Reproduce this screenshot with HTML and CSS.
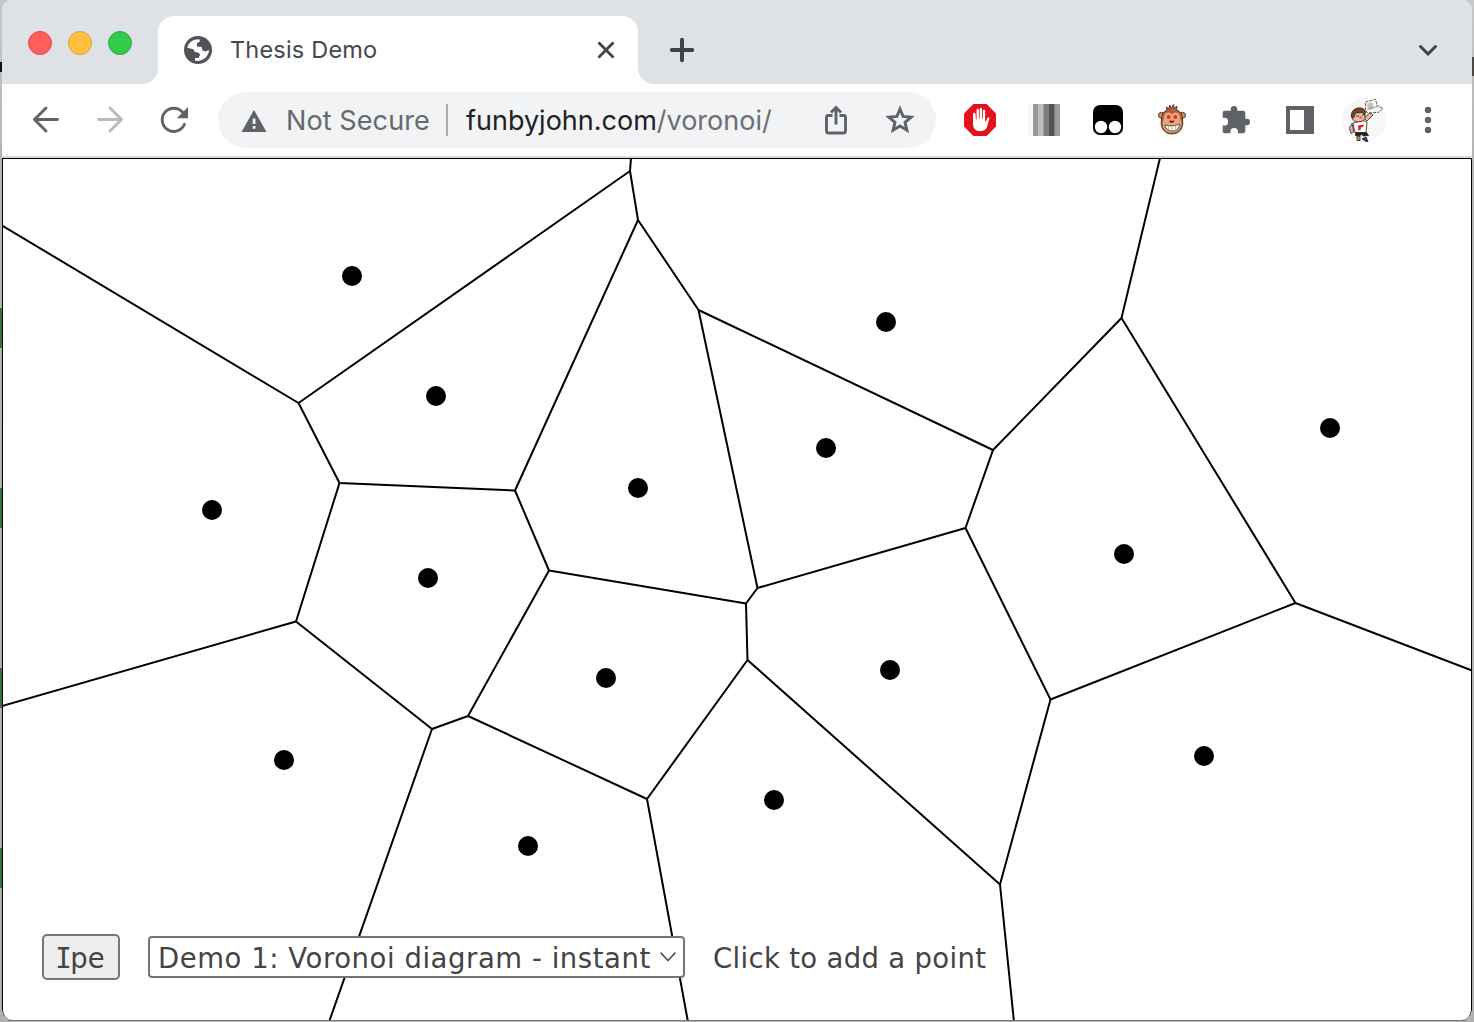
FILE: index.html
```html
<!DOCTYPE html>
<html lang="en">
<head>
<meta charset="utf-8">
<title>Thesis Demo</title>
<link rel="stylesheet" href="styles.css">
</head>
<body>
<div class="window">
  <header class="tabstrip">
    <div class="lights"><span class="light red"></span><span class="light yellow"></span><span class="light green"></span></div>
    <div class="tab">
      <svg class="globe" viewBox="0 0 28 28" width="28" height="28"><circle cx="14" cy="14" r="14" fill="#505357"/><path fill="#fff" d="M3.200 11.800C4.500 6.300 9 3 15.500 3.200L15.800 5.500 13 7.200V10.800H17.500L18.500 14.500 21.500 15.500 25 14C24.800 20.500 19 25.700 11 24.800V22H14.500L16.200 18.500 14.500 16.800 10.500 15.800 9.500 13.200z"/></svg>
      <span class="tab-title">Thesis Demo</span>
      <svg class="close" viewBox="0 0 20 20" width="20" height="20"><path d="M3.300 3.300l13.400 13.400M16.700 3.300L3.300 16.700"/></svg>
    </div>
    <svg class="newtab" viewBox="0 0 28 28" width="28" height="28"><path d="M14 3.800v20.400M3.800 14h20.400"/></svg>
    <svg class="chevron" viewBox="0 0 24 24" width="24" height="24"><path d="M4.500 8.500L12 16l7.500-7.500"/></svg>
  </header>

  <nav class="toolbar">
    <div class="slot"><svg class="line" viewBox="0 0 32 32" width="32" height="32"><path d="M27.500 15.500H5M16 4L4.500 15.500 16 27"/></svg></div>
    <div class="slot"><svg class="line faded" viewBox="0 0 32 32" width="32" height="32"><path d="M4.500 15.500H27M16 4l11.500 11.500L16 27"/></svg></div>
    <div class="slot"><svg class="line" viewBox="0 0 32 32" width="32" height="32"><path d="M26.500 20.300A11.600 11.600 0 1 1 24.400 8"/><path class="solid" d="M30 2.900v11.300H18.800z"/></svg></div>
    <div class="omnibox">
      <svg class="warning" viewBox="0 0 26 22" width="26" height="22"><path fill="#5f6368" d="M13 0l12.500 22H.5z"/><path fill="#f1f3f4" d="M11.700 8.500h2.800v5.500h-2.800zM11.700 16h2.800v2.800h-2.800z"/></svg>
      <span class="secure">Not Secure</span>
      <span class="divider"></span>
      <span class="url"><span class="host">funbyjohn.com</span><span class="path">/voronoi/</span></span>
      <svg class="share" viewBox="0 0 32 36" width="32" height="36"><path d="M12.500 13.500H8.500q-2 0-2 2V29q0 2 2 2h15q2 0 2-2V15.500q0-2-2-2h-4M16 22.500V6M11 10.500l5-5 5 5"/></svg>
      <svg class="star" viewBox="0 0 32 32" width="32" height="32"><path d="M16 5l3.100 7.400 8 .700-6.100 5.200 1.900 7.900-6.900-4.200-6.900 4.200L11 18.300l-6.100-5.200 8-.7z"/></svg>
    </div>
    <div class="extensions">
      <div class="slot"><svg viewBox="0 0 32 32" width="32" height="32"><path fill="#e4131b" d="M9.400 0h13.200L32 9.400v13.200L22.600 32H9.400L0 22.600V9.400z"/><path fill="#fff" d="M9 10.400c0-2.100 2.500-2.100 2.600 0l.3 5h.6V6.500c0-2.200 2.400-2.200 2.400 0v8.100h.8V5.200c0-2.100 2.400-2.100 2.400 0v9.500h.8V7.200c0-2 2.200-2 2.200 0v10.400l1-.4 1.300-3c.8-1.700 2.300-1 1.900.4l-2.200 8c-.9 3-3.200 4.600-6.800 4.600-5 0-7.300-2.800-7.300-8z"/></svg></div>
      <div class="slot"><svg viewBox="0 0 32 32" width="32" height="32" shape-rendering="crispEdges"><path fill="#f7f7f7" d="M0 0h5v32H0z"/><path fill="#999" d="M5 0h5v32H5z"/><path fill="#bdbdbd" d="M10 0h5v32h-5z"/><path fill="#a0a0a0" d="M15 0h1v32h-1z"/><path fill="#7d7d7d" d="M16 0h5v32h-5z"/><path fill="#555" d="M21 0h5v32h-5z"/><path fill="#7c7c7c" d="M26 0h1v32h-1z"/><path fill="#9c9c9c" d="M27 0h5v32h-5z"/></svg></div>
      <div class="slot"><svg viewBox="0 0 32 32" width="32" height="32"><rect x="1" y="1" width="30" height="30" rx="7"/><circle cx="9" cy="23" r="6.200" fill="#fff"/><circle cx="23" cy="23" r="6.200" fill="#fff"/></svg></div>
      <div class="slot"><svg viewBox="0 0 32 32" width="32" height="32"><g stroke="#5c3a28" stroke-width="1"><circle cx="5.500" cy="11.300" r="3" fill="#d98b5a"/><circle cx="26.500" cy="11.300" r="3" fill="#d98b5a"/><path fill="#a5623a" d="M11 6l-.5-3 2.500 2 .5-4 2 3 2-3.500.8 3.700 2.700-2-.5 3.600c5 2 6 6 6 10.200 1.500 7-2.500 14-10.500 14S4 23 5.500 16C5.500 11.500 7 7.500 11 6z"/></g><path fill="#e9a777" d="M8 13c0-5 6-6 8-2.500 2-3.500 8-2.500 8 2.500 0 3 1.700 4 1.200 8-.7 5-4.200 7.500-9.200 7.500S7.500 26 6.800 21C6.300 17 8 16 8 13z"/><g fill="#f52222"><circle cx="12.700" cy="13" r="1.900"/><circle cx="19.300" cy="13" r="1.900"/></g><path fill="#3a2119" d="M13.200 17c1-1 2 0 2.500 0s1.500-1 2.500 0l-.8 1.500h-3.400z"/><path fill="#fff" stroke="#4c3329" stroke-width=".8" d="M8.700 20.800q7.500 2.700 15-.8-.5 7-7 7-6.500 0-8-6.200z"/><path fill="none" stroke="#8c8c8c" stroke-width=".6" d="M12.500 22v3.700M16 22.300V27M19.700 21.800V26"/></svg></div>
      <div class="slot"><svg viewBox="0 0 32 32" width="32" height="32"><path fill="#5f6368" d="M2.700 8.700Q2.700 6.700 4.700 6.700h6.100V5.200a3.200 3.200 0 0 1 6.400 0v1.500h6.100q2 0 2 2v6.100h1.500a3.200 3.200 0 0 1 0 6.400h-1.500v6.100q0 2-2 2H18v-1.500a3.800 3.800 0 0 0-7.600 0v1.500H4.700q-2 0-2-2v-5.700h1.500a3.900 3.900 0 0 0 0-7.800H2.700z"/></svg></div>
      <div class="slot"><svg viewBox="0 0 28 28" width="28" height="28"><path fill="#5f6368" fill-rule="evenodd" d="M0 0h28v28H0zM4 4v20h14V4z"/></svg></div>
      <div class="slot"><svg viewBox="0 0 44 44" width="44" height="44"><circle cx="22" cy="22" r="22" fill="#f7f7f5"/><g stroke="#28211e" stroke-width=".8" stroke-linejoin="round"><path fill="#efb49d" d="M22 20l6-5 3 2-6 6z"/><path fill="#fff" d="M11 25l10-2.500 4 1.500-1 11H13z"/><path fill="#efb49d" d="M10 25.500L7.500 30l1.500 5.500 2.500-1.500-.5-4z"/><path fill="#1e231d" d="M13.500 34.500h11l2 3-5 .5-2-1.500-2 1.500-4-.5z"/><path fill="#b79b68" d="M15 38h3v4.500h-3z"/><path fill="#293ba8" d="M20 41l4-2 2 4.500h-2z"/><path fill="#f0b7a0" d="M10 16c0-6 13-7 13 0v4c-1 5-12 5-13 0z"/><path fill="#74452e" d="M9.500 19C8 9 22 7 23.500 14l-1 3-2-2.500-7 .5-2 5z"/><path fill="#f7f7f5" stroke-width=".7" stroke-dasharray="3 1" d="M23.500 4L33.500 1.300l2 7 5.500 2-4.500 4L25.500 15 23.500 12z"/></g><path fill="#c3c0bd" d="M25 5.500l5-1.300 2 6-6 2z"/><path fill="none" stroke="#777" stroke-width=".7" d="M27 11l8-2.500"/><path fill="#ed1c37" d="M16 27.500l6-1-1 2.700h-2l-.5 3h-2.300z"/><circle cx="18.500" cy="19.500" r="1.200" fill="#f2552c"/><path stroke="#493d3c" d="M14 18h3M20 17h2"/></svg></div>
      <div class="slot"><svg viewBox="0 0 8 28" width="8" height="28" fill="#5f6368"><circle cx="4" cy="4" r="3.200"/><circle cx="4" cy="14" r="3.200"/><circle cx="4" cy="24" r="3.200"/></svg></div>
    </div>
  </nav>

  <main class="page">
    <svg class="diagram" viewBox="2 158 1470 862" width="1470" height="862">
      <g class="edges">
        <path d="M631 158L630 171L298.500 403M2 225.500L298.500 403L339.500 483L515 490.500L638 220L630 171M638 220L698.500 310L993 450L1121.500 318L1160 158"/>
        <path d="M698.500 310L757.500 588L965.500 528L993 450M1121.500 318L1295.500 603L1472 670.500M1295.500 603L1050.500 699.500L965.500 528M1050.500 699.500L1000 884.500L1014 1022"/>
        <path d="M757.500 588L746 603.500L747.500 660L1000 884.500M746 603.500L549 570.500L515 490.500M549 570.500L468 716L432 729L296 621.500L339.500 483M296 621.500L2 706"/>
        <path d="M432 729L329 1022M468 716L647 799L747.500 660M647 799L688 1022"/>
      </g>
      <g>
        <circle cx="352" cy="276" r="10"/><circle cx="436" cy="396" r="10"/><circle cx="212" cy="510" r="10"/><circle cx="428" cy="578" r="10"/><circle cx="638" cy="488" r="10"/><circle cx="826" cy="448" r="10"/><circle cx="886" cy="322" r="10"/><circle cx="1330" cy="428" r="10"/><circle cx="1124" cy="554" r="10"/><circle cx="890" cy="670" r="10"/><circle cx="606" cy="678" r="10"/><circle cx="284" cy="760" r="10"/><circle cx="528" cy="846" r="10"/><circle cx="774" cy="800" r="10"/><circle cx="1204" cy="756" r="10"/>
      </g>
    </svg>
    <div class="controls">
      <button class="ipe"><span class="slab">I</span>pe</button>
      <div class="select"><span class="option">Demo 1: Voronoi diagram - instant</span><svg viewBox="0 0 18 12" width="18" height="12"><path d="M1.500 1.500L9 9.500l7.500-8"/></svg></div>
      <span class="hint">Click to add a point</span>
    </div>
  </main>
</div>
</body>
</html>
```
FILE: styles.css
```css
* { box-sizing: border-box; }
body {
  margin: 0;
  height: 1022px;
  padding: 0 2px 2px;
  overflow: hidden;
  background:
    linear-gradient(#34733a, #34733a) 0 308px / 2px 40px no-repeat,
    linear-gradient(#34733a, #34733a) 0 488px / 2px 40px no-repeat,
    linear-gradient(#34733a, #34733a) 0 668px / 2px 40px no-repeat,
    linear-gradient(#34733a, #34733a) 0 848px / 2px 40px no-repeat,
    linear-gradient(#111, #111) 0 62px / 2px 10px no-repeat,
    linear-gradient(#4a4744, #4a4744) 1472px 57px / 2px 19px no-repeat,
    linear-gradient(#777, #777) 8px 1020px / 1458px 1px no-repeat,
    linear-gradient(#c8c8c8, #b4b4b4 15%, #b0b0b0);
}
svg { display: block; flex: none; }
.window { height: 1020px; display: flex; flex-direction: column; background: #fff; border-radius: 10px; overflow: hidden; font-family: Inter, sans-serif; }
.tabstrip { height: 84px; flex: none; display: flex; background: #dee1e6; }
.lights { display: flex; gap: 16px; padding: 31px 0 0 26px; width: 156px; }
.light { width: 24px; height: 24px; border-radius: 50%; border: 1px solid; }
.red { background: #ff5f5b; border-color: #e2463f; }
.yellow { background: #ffbf41; border-color: #dfa033; }
.green { background: #34cb4b; border-color: #25ac38; }
.tab { position: relative; width: 480px; height: 68px; margin-top: 16px; padding: 0 22px 0 26px; display: flex; align-items: center; background: #fff; border-radius: 16px 16px 0 0; }
.tab::before, .tab::after { content: ""; position: absolute; bottom: 0; width: 16px; height: 16px; }
.tab::before { left: -16px; background: radial-gradient(circle at 0 0, transparent 15.500px, #fff 16.500px); }
.tab::after { right: -16px; background: radial-gradient(circle at 100% 0, transparent 15.500px, #fff 16.500px); }
.tab-title { margin: 0 0 2px 18px; font-size: 23.500px; letter-spacing: .2px; color: #45484c; white-space: nowrap; }
.close { margin-left: auto; }
.close path, .newtab path, .chevron path { fill: none; stroke: #3f4347; stroke-width: 2.800; stroke-linecap: round; }
.newtab { margin: 36px 0 0 30px; }
.newtab path { stroke-width: 4; }
.chevron { margin: 38px 32px 0 auto; }
.chevron path { stroke-width: 3; }
.toolbar { height: 74px; flex: none; display: flex; align-items: center; padding: 0 12px; border-bottom: 2px solid #dadada; }
.slot { width: 64px; height: 64px; display: flex; align-items: center; justify-content: center; flex: none; }
.line path { fill: none; stroke: #5f6368; stroke-width: 2.900; stroke-linecap: round; stroke-linejoin: round; }
.line.faded path { stroke: #bababc; }
.line .solid { fill: #5f6368; stroke: none; }
.omnibox { width: 718px; height: 56px; margin: 0 12px; padding: 0 20px 0 23px; border-radius: 28px; background: #f1f3f4; display: flex; align-items: center; font-size: 27px; white-space: nowrap; }
.warning { margin-top: 1px; }
.secure { width: 144px; margin-left: 19px; letter-spacing: .1px; color: #66696e; }
.divider { width: 2px; height: 32px; margin: 0 18px 0 16px; background: #a8aaad; }
.host { color: #202124; }
.path { color: #6c6f74; }
.share { margin-left: auto; }
.star { margin-left: 32px; }
.share path, .star path { fill: none; stroke: #5f6368; stroke-width: 2.900; }
.extensions { display: flex; }
.page { position: relative; height: 862px; flex: none; border: 1px solid #000; border-bottom: 0; border-radius: 0 0 10px 10px; overflow: hidden; font-family: "DejaVu Sans", sans-serif; color: #444; }
.diagram { margin: -1px; }
.edges path { fill: none; stroke: #000; stroke-width: 2; stroke-linejoin: round; }
.controls { position: absolute; left: 39px; top: 775px; display: flex; align-items: center; height: 46px; font-size: 27.500px; white-space: nowrap; }
.ipe { width: 78px; height: 46px; padding: 2px 0 0; font: inherit; color: inherit; background: #eee; border: 2px solid #777; border-radius: 5px; }
.slab { font-family: "DejaVu Sans Mono", monospace; margin: 0 -1.500px -0 -2px; }
.select { width: 537px; height: 42px; margin-left: 28px; padding: 0 6px 0 8px; display: flex; align-items: center; justify-content: space-between; background: #fff; border: 2px solid #757575; border-radius: 4px; }
.option { padding-top: 2px; letter-spacing: .550px; }
.select path { fill: none; stroke: #555; stroke-width: 1.800; }
.hint { margin-left: 28px; padding-top: 2px; letter-spacing: .320px; }
```
